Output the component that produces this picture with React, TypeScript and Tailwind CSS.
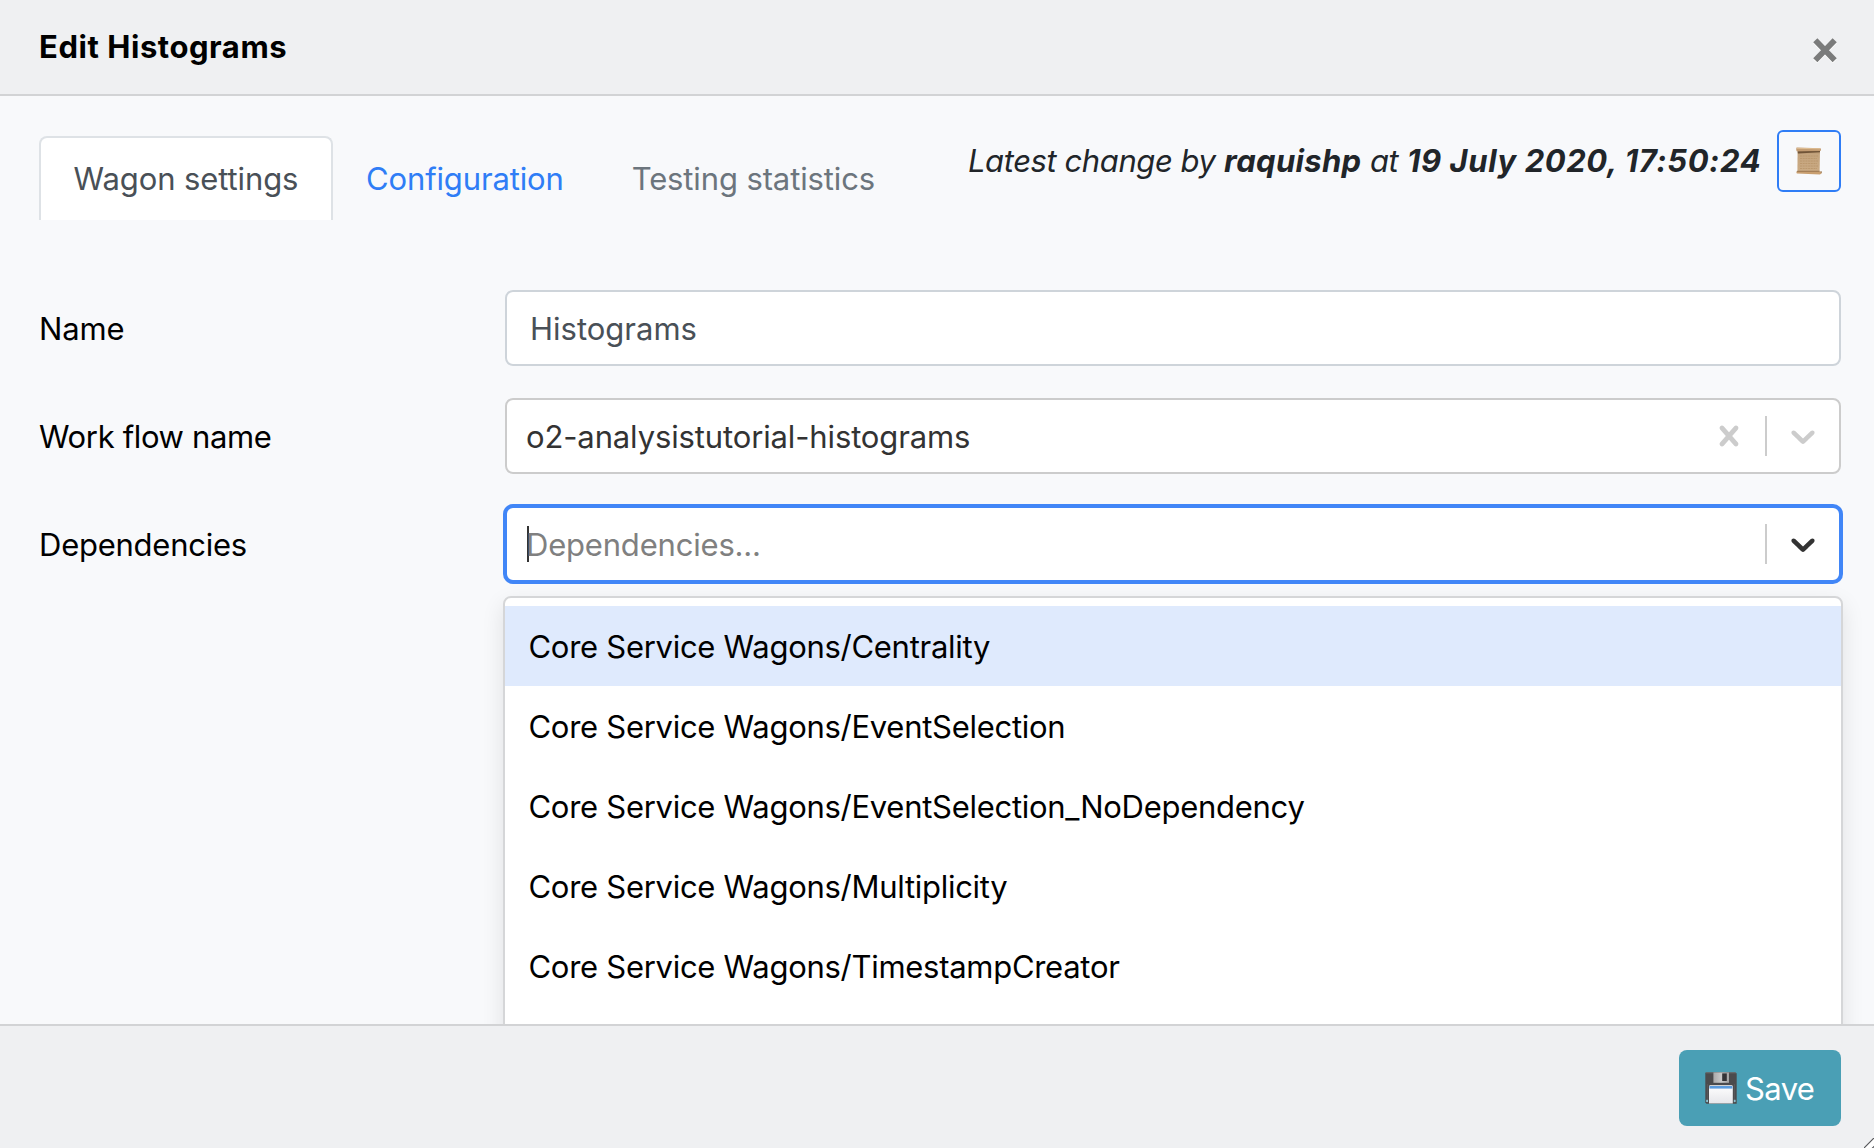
import React from "react";

const options = [
  { label: "Core Service Wagons/Centrality", active: true },
  { label: "Core Service Wagons/EventSelection" },
  { label: "Core Service Wagons/EventSelection_NoDependency" },
  { label: "Core Service Wagons/Multiplicity" },
  { label: "Core Service Wagons/TimestampCreator" },
];

function ScrollIcon() {
  return (
    <svg width="28" height="30" viewBox="0 0 28 30" aria-hidden="true">
      <defs>
        <linearGradient id="parchment" x1="0" y1="0" x2="0" y2="1">
          <stop offset="0" stopColor="#a88761" />
          <stop offset="0.2" stopColor="#c4a47e" />
          <stop offset="1" stopColor="#cbab84" />
        </linearGradient>
      </defs>
      <path d="M2.6 3.5H25L24.6 26.5H2.4Z" fill="url(#parchment)" />
      <path d="M2.6 5.2L25 4.8V6.2L3 7.4Z" fill="#705438" />
      <path d="M5 10H23M5 12.5H22M5 15H23M5 17.5H22M5 20H23M5 22.5H22" stroke="#b8946a" strokeWidth="0.8" strokeDasharray="2 0.7" />
      <path d="M1.5 1.6L25.6 2.2Q26.4 3.4 25.6 4.9L1.6 5.2Q0.8 3.4 1.5 1.6Z" fill="#c39c72" />
      <path d="M2 2.3L25 2.8" stroke="#e2c297" strokeWidth="0.9" />
      <path d="M1.6 25.2L25.6 25.4Q27.5 26.4 26.2 27.8L24.8 28.6L1.8 27.4Q1 26.2 1.6 25.2Z" fill="#c99f70" />
      <path d="M2 25.3H24.6" stroke="#8f6b45" strokeWidth="0.8" />
      <path d="M25.4 25.6L26.8 25.3L26.4 27.6Z" fill="#8f6b45" />
    </svg>
  );
}

function FloppyIcon() {
  return (
    <svg width="32" height="32" viewBox="0 0 32 32" aria-hidden="true">
      <defs>
        <linearGradient id="shutter" x1="0" y1="0" x2="1" y2="0">
          <stop offset="0" stopColor="#a9a9a9" />
          <stop offset="0.5" stopColor="#c9c9c9" />
          <stop offset="1" stopColor="#a2a2a2" />
        </linearGradient>
        <linearGradient id="paper" x1="0" y1="0" x2="0" y2="1">
          <stop offset="0" stopColor="#ffffff" />
          <stop offset="1" stopColor="#e6e6ea" />
        </linearGradient>
      </defs>
      <path d="M1 0.3H30.4L31.7 1.6V31.7H1.4L0.3 30.6V1Z" fill="#4b4b4d" />
      <path d="M0.8 0.8H31" stroke="#777" strokeWidth="0.8" />
      <rect x="8.4" y="0.4" width="15.6" height="10.4" fill="url(#shutter)" />
      <rect x="17.2" y="1.4" width="4.6" height="7.6" fill="#333336" />
      <path d="M4 31.6V14.6Q4 13.2 5.4 13.2H26.4Q27.8 13.2 27.8 14.6V31.6Z" fill="url(#paper)" />
      <rect x="4.4" y="14" width="23" height="2.6" fill="#5b9bdd" />
      <path d="M2.4 12V31M29.4 12V31" stroke="#5d5d60" strokeWidth="0.8" />
      <rect x="1.2" y="27.8" width="1.8" height="2.2" fill="#8cc3d2" />
      <rect x="28.8" y="27.8" width="1.8" height="2.2" fill="#8cc3d2" />
    </svg>
  );
}

function Chevron({ className }: { className: string }) {
  return (
    <svg className={className} width="40" height="40" viewBox="0 0 20 20" fill="currentColor" aria-hidden="true">
      <path d="M4.516 7.548c0.436-0.446 1.043-0.481 1.576 0l3.908 3.747 3.908-3.747c0.533-0.481 1.141-0.446 1.574 0 0.436 0.445 0.408 1.197 0 1.615-0.406 0.418-4.695 4.502-4.695 4.502-0.217 0.223-0.502 0.335-0.787 0.335s-0.57-0.112-0.789-0.335c0 0-4.287-4.084-4.695-4.502s-0.436-1.17 0-1.615z" />
    </svg>
  );
}

function Cross() {
  return (
    <svg className="text-[#cccccc]" width="40" height="40" viewBox="0 0 20 20" fill="currentColor" aria-hidden="true">
      <path d="M14.348 14.849c-0.469 0.469-1.229 0.469-1.697 0l-2.651-3.030-2.651 3.029c-0.469 0.469-1.229 0.469-1.697 0-0.469-0.469-0.469-1.229 0-1.697l2.758-3.15-2.759-3.152c-0.469-0.469-0.469-1.228 0-1.697s1.228-0.469 1.697 0l2.652 3.031 2.651-3.031c0.469-0.469 1.228-0.469 1.697 0s0.469 1.229 0 1.697l-2.758 3.152 2.758 3.15c0.469 0.469 0.469 1.229 0 1.698z" />
    </svg>
  );
}

function Row({ label, labelClass, children }: { label: string; labelClass: string; children: React.ReactNode }) {
  return (
    <div className="flex h-[76px] items-center">
      <div className={`w-[466px] shrink-0 pt-px text-black ${labelClass}`}>{label}</div>
      {children}
    </div>
  );
}

export default function App() {
  return (
    <div className="flex h-[1148px] w-[1874px] flex-col overflow-hidden bg-[#f8f9fb] font-['Inter',sans-serif] text-[31px] leading-[48px] whitespace-nowrap text-[#212529]">
      <header className="flex h-24 shrink-0 items-start justify-between border-b-2 border-[#d2d3d5] bg-[#eff0f2] pr-[37px] pl-[39px]">
        <h1 className="mt-[23px] font-bold tracking-[0.55px] text-black">Edit Histograms</h1>
        <button aria-label="Close" className="mt-[38px]">
          <svg width="24" height="25" viewBox="0 0 24 25" aria-hidden="true">
            <path d="M2.3 2.5L21.7 22.5M21.7 2.5L2.3 22.5" stroke="#ffffff" strokeWidth="5.8" transform="translate(0 0.8)" />
            <path d="M2.3 2.3L21.7 22.3M21.7 2.3L2.3 22.3" stroke="#7a7b7b" strokeWidth="5.8" />
          </svg>
        </button>
      </header>

      <main className="relative min-h-0 flex-1 overflow-hidden pr-[33px] pl-[39px]">
        <div className="flex h-[194px] items-start">
          <nav className="mt-10 flex h-[84px] items-start">
            <div className="flex h-full w-[294px] justify-center rounded-t-lg border-2 border-b-0 border-[#dee2e6] bg-white pt-[17px] tracking-[-0.1px] text-[#495057]">
              Wagon settings
            </div>
            <div className="ml-[33px] pt-[19px] tracking-[-0.14px] text-[#2f7df6]">Configuration</div>
            <div className="ml-[68px] pt-[19px] tracking-[-0.12px] text-[#6c757d]">Testing statistics</div>
          </nav>
          <div className="mt-[34px] ml-auto flex items-center">
            <p className="flex italic">
              <span className="w-[256px] tracking-[-0.42px]">Latest change by</span>
              <b className="w-[146px] tracking-[0.31px]">raquishp</b>
              <span className="w-[37px] tracking-[-0.5px]">at</span>
              <b className="w-[370px] tracking-[0.58px]">19 July 2020, 17:50:24</b>
            </p>
            <button className="flex h-[62px] w-16 items-center justify-center rounded-md border-2 border-[#2f7df6]">
              <ScrollIcon />
            </button>
          </div>
        </div>

        <div className="flex flex-col gap-8">
          <Row label="Name" labelClass="tracking-[-0.13px]">
            <div className="flex h-full flex-1 items-center rounded-lg border-2 border-[#ced4da] bg-white pt-px pl-[23px] text-[#495057]">
              Histograms
            </div>
          </Row>
          <Row label="Work flow name" labelClass="tracking-[-0.36px]">
            <div className="flex h-full flex-1 items-center rounded-lg border-2 border-[#cccccc] bg-white pr-4 pl-[19px] text-[#333333]">
              <span className="flex-1 pt-px tracking-[-0.13px]">o2-analysistutorial-histograms</span>
              <Cross />
              <span className="mr-4 ml-4 h-10 w-0.5 bg-[#cccccc]" />
              <Chevron className="text-[#cccccc]" />
            </div>
          </Row>
          <Row label="Dependencies" labelClass="tracking-[-0.24px]">
            <div className="relative h-full flex-1">
              <div className="flex h-full items-center rounded-lg border-2 border-[#4186f7] bg-white pr-4 pl-[20px] shadow-[0_0_0_2px_#4186f7]">
                <span className="h-9 w-0.5 bg-[#333333]" />
                <span className="-ml-[3px] flex-1 pt-px tracking-[-0.19px] text-[#808080]">Dependencies...</span>
                <span className="mr-4 h-10 w-0.5 bg-[#cccccc]" />
                <Chevron className="text-[#333333]" />
              </div>
              <div className="absolute -right-[2px] -left-[2px] top-[90px] h-[600px] overflow-hidden rounded-lg border-2 border-[#d5d6d8] bg-white pt-2 text-black shadow-[0_8px_22px_rgba(0,0,0,0.1)]">
                {options.map((o) => (
                  <div
                    key={o.label}
                    className={`flex h-20 items-center pt-px pl-[23.5px] tracking-[-0.28px] ${o.active ? "bg-[#dfeafd]" : "bg-white"}`}
                  >
                    {o.label}
                  </div>
                ))}
              </div>
            </div>
          </Row>
        </div>
      </main>

      <footer className="relative flex h-[124px] shrink-0 items-start justify-end border-t-2 border-[#d2d3d5] bg-[#eff0f2] pt-6 pr-[33px]">
        <button className="flex h-[76px] w-[162px] items-center rounded-lg bg-[#4a9fb5] pl-[26px] text-white">
          <FloppyIcon />
          <span className="ml-2 pt-px tracking-[-0.6px]">Save</span>
        </button>
        <svg className="absolute right-0 bottom-0" width="10" height="10" viewBox="0 0 10 10" aria-hidden="true">
          <path d="M0 10L10 0V10Z" fill="#ffffff" />
          <path d="M0 10L10 0M8 10.5L10.5 8" stroke="#55575a" strokeWidth="1.2" />
        </svg>
      </footer>
    </div>
  );
}
